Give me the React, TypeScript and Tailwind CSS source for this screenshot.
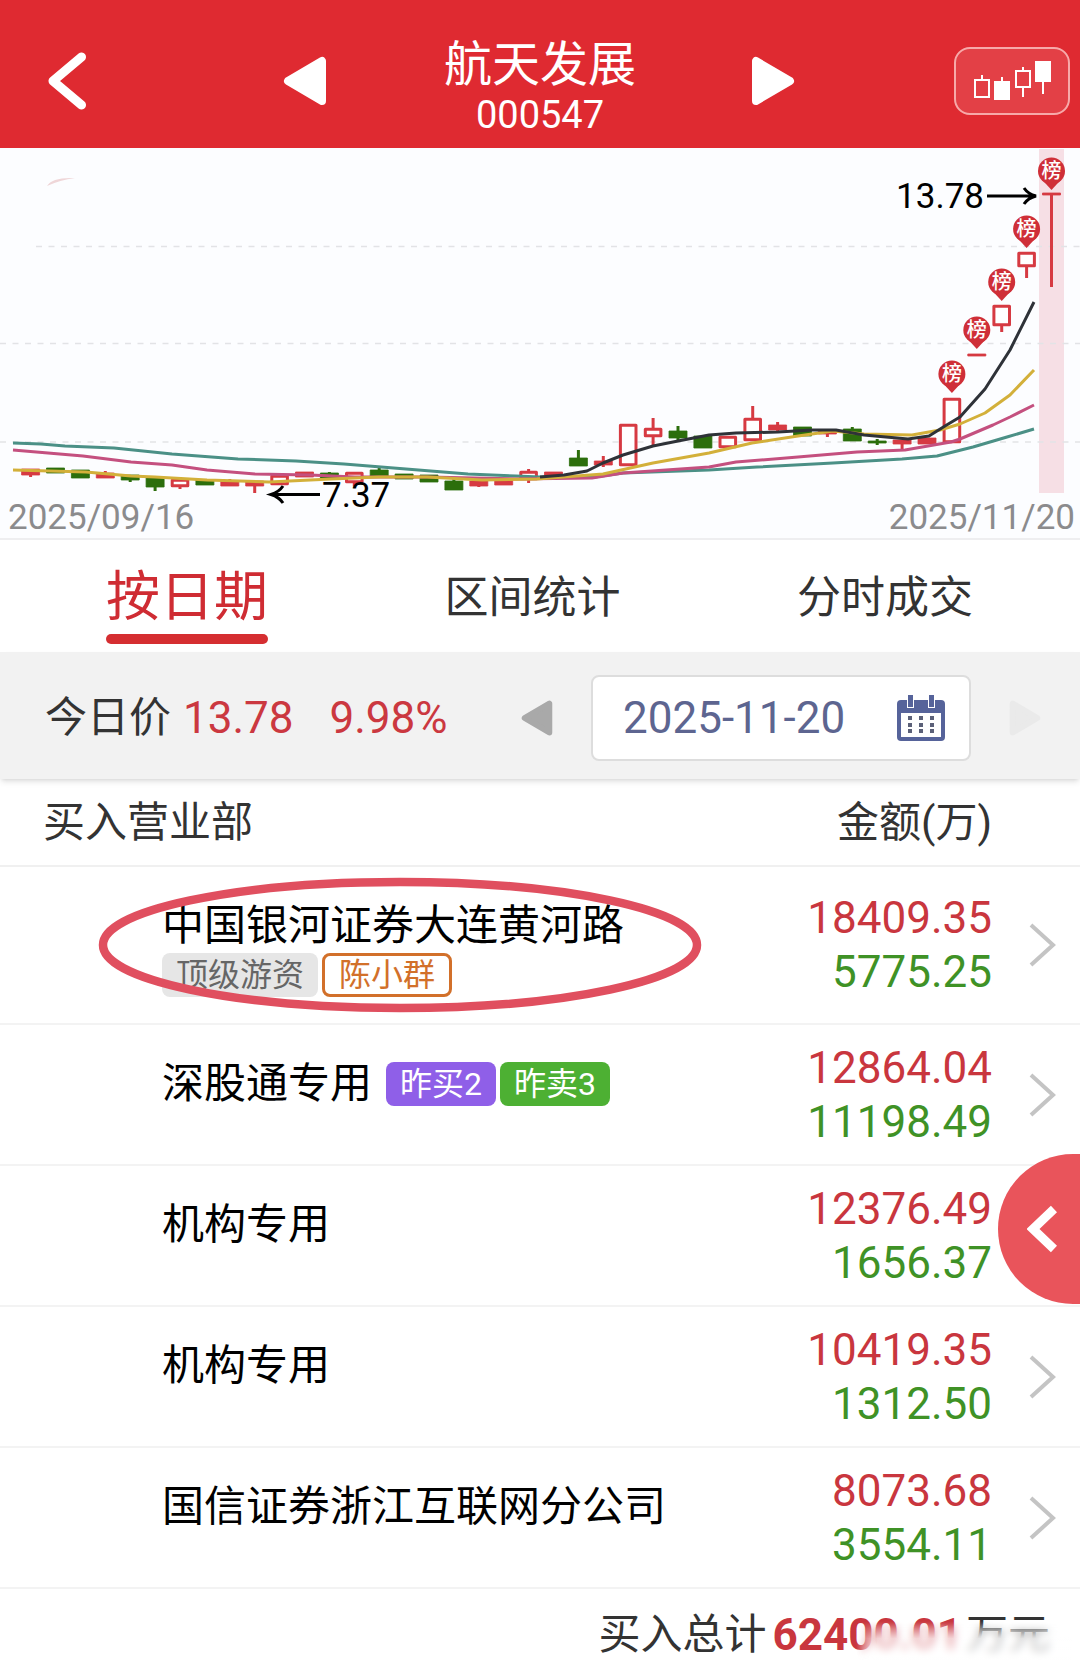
/**
 * Stock buyer ranking page
 *
 * Daily candles on top, then the brokerage seats that bought the stock on the selected day.
 */

import { useState } from 'react';

type CandleKind = 'up' | 'hollow' | 'down';

// [kind, body top, body bottom, high, low]
type Candle = [CandleKind, number, number, number, number];

const RED = '#d63a42';
const GREEN = '#2c6e0c';

const CANDLES: Candle[] = [
  ['up', 321, 327, 321, 329],
  ['down', 320, 325, 320, 325],
  ['down', 322, 330, 322, 330],
  ['up', 325, 330, 323, 330],
  ['down', 327, 332, 327, 334],
  ['down', 329, 339, 329, 343],
  ['hollow', 331, 339, 331, 341],
  ['down', 332, 337, 332, 337],
  ['up', 333, 338, 331, 338],
  ['up', 333, 338, 333, 345],
  ['hollow', 327, 337, 327, 337],
  ['up', 324, 329, 324, 329],
  ['down', 325, 330, 324, 330],
  ['hollow', 324, 335, 324, 338],
  ['down', 322, 328, 319, 328],
  ['down', 326, 331, 326, 331],
  ['down', 327, 334, 327, 334],
  ['down', 333, 342, 330, 342],
  ['up', 333, 338, 333, 339],
  ['up', 331, 337, 331, 337],
  ['hollow', 323, 332, 321, 335],
  ['up', 324, 329, 324, 329],
  ['down', 310, 318, 302, 318],
  ['up', 313, 317, 308, 319],
  ['hollow', 276, 318, 276, 318],
  ['hollow', 280, 289, 270, 297],
  ['down', 283, 290, 278, 292],
  ['down', 288, 300, 288, 300],
  ['hollow', 288, 300, 288, 300],
  ['hollow', 270, 293, 258, 293],
  ['up', 277, 282, 274, 285],
  ['down', 279, 288, 279, 288],
  ['up', 282, 286, 282, 289],
  ['down', 281, 293, 279, 293],
  ['down', 293, 295, 291, 297],
  ['up', 292, 296, 292, 303],
  ['up', 290, 296, 290, 296],
  ['hollow', 250, 295, 250, 295],
  ['up', 206, 208, 207, 207],
  ['hollow', 157, 178, 157, 184],
  ['hollow', 104, 119, 104, 130],
  ['up', 45, 47, 46, 139],
];

// Days on which the stock made the ranking list
const PINS = [
  { day: 37, y: 226 },
  { day: 38, y: 182 },
  { day: 39, y: 134 },
  { day: 40, y: 81 },
  { day: 41, y: 23 },
];

const AVERAGES = [
  {
    color: '#4b9086',
    points:
      '13,295 41,296 65,298 114,300 172,306 238,311 296,313 344,316 406,321 468,326 516,328 540,329 595,329 623,325 709,322 757,319 833,315 902,311 937,308 973,299 1007,289 1034,281',
  },
  {
    color: '#c4507f',
    points:
      '13,302 83,308 131,314 172,317 207,322 255,326 310,327 355,329 427,329 516,331 592,330 623,325 709,319 736,314 798,309 857,304 905,302 951,294 960,291 993,277 1010,269 1034,257',
  },
  {
    color: '#d3b03a',
    points:
      '13,322 86,324 131,328 155,329 207,332 269,334 331,331 379,329 427,329 482,332 537,331 603,326 653,315 709,305 752,295 798,288 833,283 864,286 912,287 940,282 960,276 985,265 1010,247 1034,222',
  },
  {
    color: '#2e3238',
    points:
      '540,329 564,327 587,323 603,315 623,307 653,298 678,293 709,287 736,285 778,284 812,282 836,282 864,287 908,291 929,288 945,278 960,269 985,241 1010,202 1034,154',
  },
];

interface Tag {
  text: string;
  className: string;
}

interface Seat {
  name: string;
  buy: string;
  sell: string;
  tags?: Tag[];
  tagsBelow?: boolean;
  circled?: boolean;
}

const SEATS: Seat[] = [
  {
    name: '中国银河证券大连黄河路',
    buy: '18409.35',
    sell: '5775.25',
    tagsBelow: true,
    circled: true,
    tags: [
      { text: '顶级游资', className: 'bg-[#e6e6e6] text-[#666666] px-3.5' },
      { text: '陈小群', className: 'border-3 border-[#d2702a] text-[#d2702a] px-3.5' },
    ],
  },
  {
    name: '深股通专用',
    buy: '12864.04',
    sell: '11198.49',
    tags: [
      { text: '昨买2', className: 'bg-[#8f5fe8] text-white px-3.5' },
      { text: '昨卖3', className: 'bg-[#4db033] text-white px-3.5' },
    ],
  },
  { name: '机构专用', buy: '12376.49', sell: '1656.37' },
  { name: '机构专用', buy: '10419.35', sell: '1312.50' },
  { name: '国信证券浙江互联网分公司', buy: '8073.68', sell: '3554.11' },
];

const TABS = ['按日期', '区间统计', '分时成交'];

function Triangle({ left = false, className }: { left?: boolean; className: string }) {
  return (
    <svg viewBox="0 0 44 50" className={className} aria-hidden="true">
      <path
        d={left ? 'M39 5V45L5 25Z' : 'M5 5V45L39 25Z'}
        fill="currentColor"
        stroke="currentColor"
        strokeWidth="8"
        strokeLinejoin="round"
      />
    </svg>
  );
}

function Header() {
  return (
    <header className="grid h-[148px] grid-cols-[1fr_auto_1fr] items-center bg-[#df2a31] pt-3.5 text-white">
      <div className="flex items-center justify-between pr-[117px] pl-12">
        <button type="button" aria-label="返回">
          <svg viewBox="0 0 38 58" className="h-[58px] w-[38px]" fill="none" stroke="currentColor" strokeWidth="9" strokeLinecap="round" strokeLinejoin="round">
            <path d="M33.500 5L5 29L33.500 53" />
          </svg>
        </button>
        <button type="button" aria-label="上一只">
          <Triangle left className="h-[50px] w-11" />
        </button>
      </div>
      <div className="pt-3.5 text-center">
        <h1 className="text-[48px] leading-[54px]">航天发展</h1>
        <p className="text-[38px] leading-[46px]">000547</p>
      </div>
      <div className="flex items-center justify-between pr-2.5 pl-[115px]">
        <button type="button" aria-label="下一只">
          <Triangle className="h-[50px] w-11" />
        </button>
        <button type="button" aria-label="K线" className="rounded-2xl border-2 border-[#f7a9a9] bg-[#e34046]">
          <svg viewBox="956 49 112 64" className="h-16 w-28" fill="none" stroke="#fff" strokeWidth="2">
            <path d="M975 80H989V97H975ZM982 75V80M1002 77V82M1016 71H1030V87H1016ZM1023 67V71M1023 87V97M1043 82V94" />
            <path d="M994 81H1010V100H994ZM1035 61H1051V82H1035Z" fill="#fff" stroke="none" />
          </svg>
        </button>
      </div>
    </header>
  );
}

function CandleShape({ candle, index }: { candle: Candle; index: number }) {
  const [kind, top, bottom, high, low] = candle;
  const x = 30.6 + index * 24.9;
  const color = kind === 'down' ? GREEN : RED;
  const inset = kind === 'hollow' ? 1.2 : 0;

  return (
    <g stroke={color} strokeWidth="3">
      {high < top && <line x1={x} y1={high} x2={x} y2={top} />}
      {low > bottom && <line x1={x} y1={bottom} x2={x} y2={low} />}
      <rect
        x={x - 9 + inset}
        y={top + inset}
        width={18 - inset * 2}
        height={Math.max(1, bottom - top - inset * 2)}
        fill={kind === 'hollow' ? '#fff' : color}
        strokeWidth={kind === 'hollow' ? 3 : 0.8}
        strokeLinejoin="round"
      />
    </g>
  );
}

function PriceChart() {
  return (
    <svg viewBox="0 0 1080 390" className="block h-auto w-full border-b-2 border-[#eeeef0] bg-[#fcfdff]" role="img" aria-label="日K线">
      <rect x="1039" y="1" width="25" height="344" fill="#f6dfe5" />
      <path d="M47 38Q52 29 75 30Q60 32 47 38Z" fill="#efd6d8" />

      {/* Grid */}
      <g stroke="#e2e3e6" strokeWidth="1.5" strokeDasharray="6 6.500">
        <line x1="36" y1="98.500" x2="1080" y2="98.500" />
        <line x1="0" y1="195.500" x2="1080" y2="195.500" />
        <line x1="0" y1="294" x2="1080" y2="294" />
      </g>

      {CANDLES.map((candle, i) => (
        <CandleShape key={i} candle={candle} index={i} />
      ))}

      {/* Moving averages */}
      {AVERAGES.map((line) => (
        <polyline key={line.color} points={line.points} fill="none" stroke={line.color} strokeWidth="3" strokeLinejoin="round" />
      ))}

      {PINS.map(({ day, y }) => {
        const x = 30.6 + day * 24.9;
        return (
          <g key={day}>
            <path d={`M${x - 11} ${y + 7}L${x} ${y + 19}L${x + 11} ${y + 7}Z`} fill="#cf2f38" />
            <circle cx={x} cy={y} r="13.500" fill="#cf2f38" />
            <text x={x} y={y + 7} fontSize="20" fontWeight="500" textAnchor="middle" fill="#fff">
              榜
            </text>
          </g>
        );
      })}

      {/* High and low marks */}
      <g fill="none" stroke="#000" strokeWidth="3">
        <path d="M320 346.500H271M283 338Q279 344 271 346.500Q279 349 283 355" />
        <path d="M987 48H1036M1024 40Q1028 46 1036 48Q1028 50 1024 56" />
      </g>
      <g fontSize="35" fill="#000">
        <text x="322" y="359">7.37</text>
        <text x="984" y="60" textAnchor="end">13.78</text>
      </g>
      <g fontSize="35" fill="#8b8b8d">
        <text x="8" y="381">2025/09/16</text>
        <text x="1075" y="381" textAnchor="end">2025/11/20</text>
      </g>
    </svg>
  );
}

function Tabs() {
  const [active, setActive] = useState(TABS[0]);

  return (
    <nav className="flex h-28 items-start justify-between pr-[107px] pl-[106px]">
      {TABS.map((tab) => (
        <button
          key={tab}
          type="button"
          onClick={() => setActive(tab)}
          className={
            tab === active
              ? 'flex flex-col pt-[22px] text-[54px] leading-[72px] text-[#cf2c33]'
              : 'pt-[22px] text-[44px] leading-[72px] text-[#333333]'
          }
        >
          {tab}
          {tab === active && <span className="h-2.5 w-full rounded-full bg-[#d52e31]" />}
        </button>
      ))}
    </nav>
  );
}

function CalendarIcon() {
  return (
    <svg viewBox="0 0 48 46" className="h-[46px] w-12" aria-hidden="true">
      <rect x="0" y="5" width="48" height="41" rx="4" fill="#56639a" />
      <rect x="4" y="18" width="40" height="24" fill="#fff" />
      <path d="M10 4H17V13H10ZM31 4H38V13H31Z" fill="#fff" />
      <path d="M11 0H16V12H11ZM32 0H37V12H32Z" fill="#56639a" />
      <path
        d="M11 21H15V25H11ZM22 21H26V25H22ZM33 21H37V25H33ZM11 28H15V32H11ZM22 28H26V32H22ZM33 28H37V32H33ZM11 34H15V38H11ZM22 34H26V38H22ZM33 34H37V38H33Z"
        fill="#5b6078"
      />
    </svg>
  );
}

function DateBar() {
  return (
    <section className="relative flex h-[127px] items-center justify-between bg-[#f2f2f2] pt-1 pr-[39px] pl-[45px] shadow-md">
      <p className="flex items-center text-[44px] leading-[54px] text-[#cb3840]">
        <span className="mr-3 text-[42px] text-[#333333]">今日价</span>
        <span className="mr-9">13.78</span>
        <span>9.98%</span>
      </p>
      <div className="flex items-center gap-[38px]">
        <button type="button" aria-label="前一天" className="text-[#a9a9a9]">
          <Triangle left className="h-[42px] w-8" />
        </button>
        <label className="flex h-[86px] w-[380px] items-center justify-between rounded-lg border-2 border-[#dddddd] bg-white pr-6 pl-[30px]">
          <input
            type="text"
            aria-label="日期"
            defaultValue="2025-11-20"
            className="w-[250px] bg-transparent text-[44px] leading-[54px] text-[#5d6590] outline-none"
          />
          <CalendarIcon />
        </label>
        <button type="button" aria-label="后一天" className="text-[#eaeaea]">
          <Triangle className="h-[38px] w-8" />
        </button>
      </div>
    </section>
  );
}

function SeatRow({ seat }: { seat: Seat }) {
  const tags = seat.tags?.map((tag) => (
    <span key={tag.text} className={`flex h-11 items-center rounded-lg text-[32px] leading-none ${tag.className}`}>
      {tag.text}
    </span>
  ));

  return (
    <tr>
      <td className={`relative border-b-2 border-[#f3f3f3] pt-8 pl-[162px] align-top ${seat.circled ? 'h-[158px]' : 'h-[141px]'}`}>
        <div className="flex items-center gap-1 text-[42px] leading-[54px] text-black">
          <span className="mr-2.5">{seat.name}</span>
          {!seat.tagsBelow && tags}
        </div>
        {seat.tagsBelow && <div className="flex gap-1">{tags}</div>}
        {seat.circled && (
          <svg viewBox="0 0 604 136" className="pointer-events-none absolute top-[10px] left-[98px] h-[136px] w-[604px]" aria-hidden="true">
            <ellipse cx="302" cy="68" rx="297" ry="63" fill="none" stroke="#e04f5f" strokeWidth="8.500" />
          </svg>
        )}
      </td>
      <td className="border-b-2 border-[#f3f3f3] text-right text-[44px] leading-[54px]">
        <p className="text-[#c9363e]">{seat.buy}</p>
        <p className="text-[#3f9226]">{seat.sell}</p>
      </td>
      <td className="w-[88px] border-b-2 border-[#f3f3f3] pl-[37px]">
        <svg viewBox="0 0 27 44" className="h-11 w-[27px]" fill="none" stroke="#c4c4c4" strokeWidth="4" aria-hidden="true">
          <path d="M2 2L24 22L2 42" />
        </svg>
      </td>
    </tr>
  );
}

export default function App() {
  return (
    <div className="min-h-screen overflow-hidden bg-white font-['Roboto','Noto_Sans_CJK_SC',sans-serif]">
      <Header />
      <PriceChart />
      <main>
        <Tabs />
        <DateBar />
        <table className="w-full border-separate border-spacing-0">
          <thead className="text-[42px] leading-[54px] text-[#333333]">
            <tr>
              <th className="h-[88px] border-b-2 border-[#f0f0f0] pt-0.5 pl-[43px] text-left font-normal">买入营业部</th>
              <th className="border-b-2 border-[#f0f0f0] pt-0.5 text-right font-normal">金额(万)</th>
              <th className="border-b-2 border-[#f0f0f0]" />
            </tr>
          </thead>
          <tbody>
            {SEATS.map((seat, i) => (
              <SeatRow key={i} seat={seat} />
            ))}
          </tbody>
        </table>

        {/* Total, partly washed out by the watermark */}
        <p className="relative flex h-20 items-center justify-end pt-3 pr-[30px] text-[42px] leading-[54px] text-[#333333]">
          买入总计
          <span className="mr-1 ml-1.5 text-[44px] font-bold text-[#c9363e]">62400.01</span>
          万元
          <span className="absolute right-2 bottom-1 h-11 w-[216px] bg-linear-to-b from-white/40 to-white/90 mask-t-from-60% mask-l-from-90% backdrop-blur-xs" />
        </p>
      </main>

      <button
        type="button"
        aria-label="展开"
        className="fixed top-[1154px] right-0 flex h-[150px] w-[82px] items-center rounded-l-full bg-[#e9545b] pl-[29px] text-white"
      >
        <svg viewBox="0 0 30 48" className="h-12 w-[30px]" fill="none" stroke="currentColor" strokeWidth="9">
          <path d="M27 4L6 24L27 44" />
        </svg>
      </button>
    </div>
  );
}
